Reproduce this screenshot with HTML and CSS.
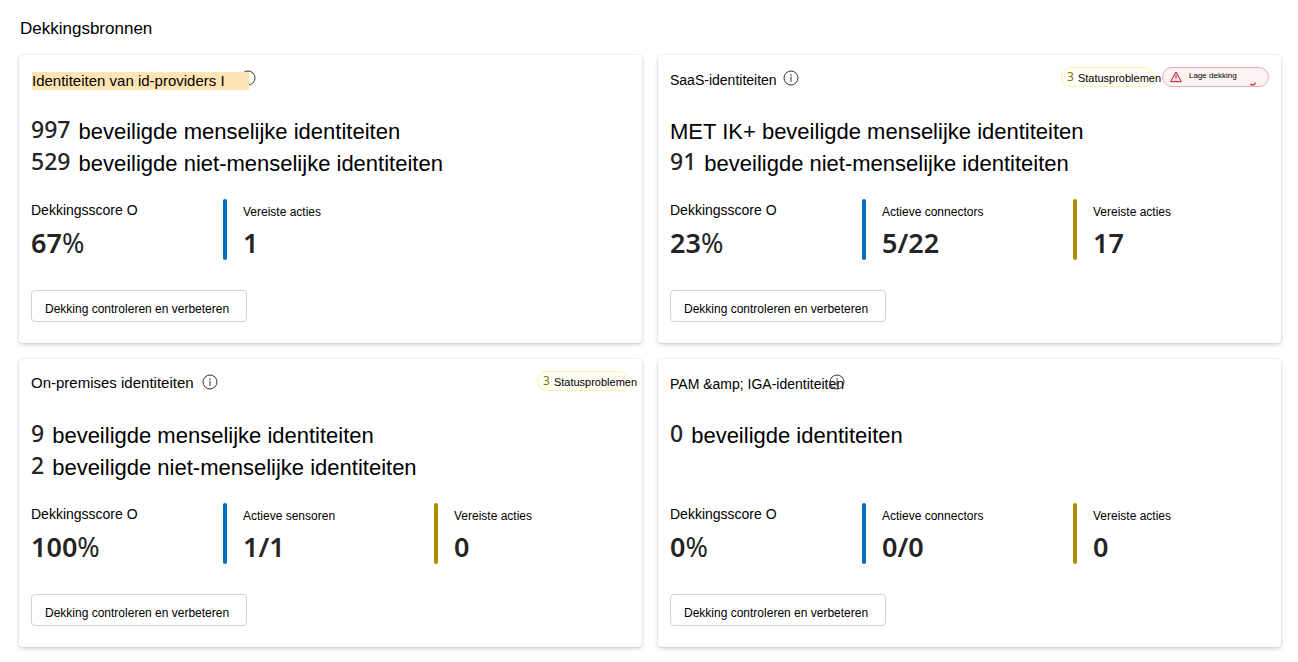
FILE: index.html
```html
<!DOCTYPE html>
<html lang="nl">
<head>
    <meta charset="UTF-8">
    <meta name="viewport" content="width=device-width, initial-scale=1.0">
    <title>Dekkingsbronnen</title>
    <link rel="stylesheet" href="styles.css">
</head>
<body>
    <!-- Shared icons -->
    <svg class="sprite" aria-hidden="true">
        <symbol id="info" viewBox="0 0 16 16">
            <circle cx="8" cy="8" r="7" fill="none" stroke="currentColor" stroke-width="1"/>
            <path d="M8 7v4.5" stroke="currentColor" stroke-width="1" stroke-linecap="round"/>
            <circle cx="8" cy="5" r="0.8" fill="currentColor"/>
        </symbol>
        <symbol id="ring" viewBox="0 0 16 16">
            <circle cx="8" cy="8" r="7" fill="none" stroke="currentColor" stroke-width="1"/>
        </symbol>
    </svg>

    <main class="page">
        <h1>Dekkingsbronnen</h1>

        <div class="cards">
            <section class="card">
                <div class="card-header">
                    <h2 class="highlight">Identiteiten van id-providers I</h2>
                    <svg class="icon icon-behind"><use href="#ring"/></svg>
                </div>
                <div class="totals">
                    <p><span class="count">997</span> beveiligde menselijke identiteiten</p>
                    <p><span class="count">529</span> beveiligde niet-menselijke identiteiten</p>
                </div>
                <div class="metrics">
                    <div class="metric score">
                        <div class="label">Dekkingsscore O</div>
                        <div class="value">67<span class="percent">%</span></div>
                    </div>
                    <div class="metric blue">
                        <div class="label">Vereiste acties</div>
                        <div class="value">1</div>
                    </div>
                </div>
                <button type="button">Dekking controleren en verbeteren</button>
            </section>

            <section class="card">
                <div class="card-header">
                    <h2 class="compact">SaaS-identiteiten</h2>
                    <svg class="icon"><use href="#info"/></svg>
                    <div class="badges">
                        <span class="badge warning"><span class="badge-count">3</span>Statusproblemen</span>
                        <span class="badge danger">
                            <svg class="alert" viewBox="0 0 12 12">
                                <path d="M6 1 L11.3 10.7 H0.7 Z" fill="none" stroke="currentColor" stroke-linejoin="round"/>
                                <path d="M6 4.3v3" stroke="currentColor" stroke-linecap="round"/>
                                <circle cx="6" cy="9" r="0.6" fill="currentColor"/>
                            </svg>
                            <span class="badge-text">Lage dekking</span>
                            <svg class="tail" viewBox="0 0 6 4">
                                <path d="M0.3 2 Q1.5 3.4 3.6 2.8 Q5.2 2.4 5.4 0.5" fill="none" stroke="currentColor" stroke-width="1.2"/>
                            </svg>
                        </span>
                    </div>
                </div>
                <div class="totals">
                    <p>MET IK+ beveiligde menselijke identiteiten</p>
                    <p><span class="count">91</span> beveiligde niet-menselijke identiteiten</p>
                </div>
                <div class="metrics">
                    <div class="metric score">
                        <div class="label">Dekkingsscore O</div>
                        <div class="value">23<span class="percent">%</span></div>
                    </div>
                    <div class="metric blue">
                        <div class="label">Actieve connectors</div>
                        <div class="value">5/22</div>
                    </div>
                    <div class="metric gold">
                        <div class="label">Vereiste acties</div>
                        <div class="value">17</div>
                    </div>
                </div>
                <button type="button">Dekking controleren en verbeteren</button>
            </section>

            <section class="card">
                <div class="card-header">
                    <h2>On-premises identiteiten</h2>
                    <svg class="icon icon-spaced"><use href="#info"/></svg>
                    <div class="badges">
                        <span class="badge warning"><span class="badge-count">3</span>Statusproblemen</span>
                    </div>
                </div>
                <div class="totals">
                    <p><span class="count">9</span> beveiligde menselijke identiteiten</p>
                    <p><span class="count">2</span> beveiligde niet-menselijke identiteiten</p>
                </div>
                <div class="metrics">
                    <div class="metric score">
                        <div class="label">Dekkingsscore O</div>
                        <div class="value">100<span class="percent">%</span></div>
                    </div>
                    <div class="metric blue">
                        <div class="label">Actieve sensoren</div>
                        <div class="value">1/1</div>
                    </div>
                    <div class="metric gold">
                        <div class="label">Vereiste acties</div>
                        <div class="value">0</div>
                    </div>
                </div>
                <button type="button">Dekking controleren en verbeteren</button>
            </section>

            <section class="card">
                <div class="card-header">
                    <h2 class="compact">PAM &amp;amp; IGA-identiteiten</h2>
                    <svg class="icon icon-over"><use href="#info"/></svg>
                </div>
                <div class="totals">
                    <p><span class="count">0</span> beveiligde identiteiten</p>
                </div>
                <div class="metrics">
                    <div class="metric score">
                        <div class="label">Dekkingsscore O</div>
                        <div class="value">0<span class="percent">%</span></div>
                    </div>
                    <div class="metric blue">
                        <div class="label">Actieve connectors</div>
                        <div class="value">0/0</div>
                    </div>
                    <div class="metric gold">
                        <div class="label">Vereiste acties</div>
                        <div class="value">0</div>
                    </div>
                </div>
                <button type="button">Dekking controleren en verbeteren</button>
            </section>
        </div>
    </main>
</body>
</html>
```
FILE: styles.css
```css
* {
    box-sizing: border-box;
}
body {
    margin: 0;
    background-color: #fff;
    color: #000;
    font-family: "Liberation Sans", Arial, sans-serif;
}
h1, h2, p {
    margin: 0;
    font-weight: normal;
}
.sprite {
    display: none;
}
.page {
    padding: 17px 17px 15px 19px;
}
h1 {
    padding-left: 1px;
    font-size: 17px;
    line-height: 24px;
    margin-bottom: 14px;
}
.cards {
    display: grid;
    grid-template-columns: 1fr 1fr;
    gap: 16px;
}
.card {
    padding: 12px 12px 21px;
    border-radius: 4px;
    background-color: #fff;
    box-shadow: 0 0 2px rgba(0, 0, 0, 0.14), 0 2px 4px rgba(0, 0, 0, 0.16);
}
.card-header {
    display: flex;
    align-items: flex-start;
    height: 28px;
    margin-bottom: 20px;
}
h2 {
    padding-top: 3px;
    font-size: 15px;
    line-height: 18px;
    white-space: nowrap;
}
.compact {
    padding-top: 4px;
    font-size: 14px;
}
.highlight {
    position: relative;
    z-index: 1;
    margin-top: 5px;
    margin-left: 1px;
    padding-top: 0;
    padding-right: 24px;
    background-color: #ffe5b4;
}
.icon {
    flex: none;
    width: 16px;
    height: 16px;
    margin-top: 3px;
    margin-left: 6px;
    color: #333;
}
.icon-spaced {
    margin-left: 8px;
}
.icon-behind {
    margin-left: -9px;
}
.icon-over {
    margin-left: -15px;
}
.badges {
    display: flex;
    gap: 8px;
    margin-left: auto;
}
.badge {
    display: flex;
    align-items: center;
    height: 20px;
    border: 1px solid;
    border-radius: 10px;
    font-size: 11px;
    white-space: nowrap;
}
.warning {
    position: relative;
    z-index: 1;
    width: 93px;
    padding: 2px 0 0 5px;
    border-color: #fef3a8;
    background-color: #fffef5;
}
.badge-count {
    margin-right: 4px;
    color: #817400;
    font-family: "Noto Sans", sans-serif;
    font-size: 12px;
    line-height: 16px;
    padding-bottom: 2px;
}
.danger {
    width: 107px;
    padding: 0 12px 0 7px;
    border-color: #eeacb2;
    background-color: #fdf3f4;
}
.badge-text {
    margin-left: 7px;
    padding-bottom: 4px;
    font-size: 8px;
}
.alert {
    width: 12px;
    height: 12px;
    color: #c50f1f;
}
.tail {
    align-self: flex-end;
    width: 6px;
    height: 4px;
    margin-left: auto;
    color: #c50f1f;
}
.totals {
    min-height: 64px;
    margin-bottom: 20px;
    font-size: 22px;
    line-height: 34px;
}
.totals p {
    display: flex;
    gap: 8px;
    height: 32px;
}
.count {
    color: #242424;
    font-family: "Noto Sans", sans-serif;
    font-size: 23px;
    font-weight: 500;
    line-height: 28px;
}
.metrics {
    display: grid;
    grid-template-columns: 192fr 211fr 196fr;
    margin-bottom: 30px;
}
.metric {
    position: relative;
    height: 61px;
    padding-left: 20px;
}
.metric::before {
    content: "";
    position: absolute;
    top: 0;
    bottom: 0;
    left: 0;
    width: 4px;
    border-radius: 2px;
}
.blue::before {
    background-color: #006cbe;
}
.gold::before {
    background-color: #ae8c00;
}
.score {
    padding-left: 0;
}
.label {
    padding-top: 2px;
    font-size: 12px;
    line-height: 22px;
}
.score .label {
    padding-top: 0;
    padding-bottom: 2px;
    font-size: 14px;
}
.value {
    color: #242424;
    font-family: "Noto Sans", sans-serif;
    font-size: 27px;
    font-weight: 600;
    line-height: 40px;
}
.percent {
    font-weight: 400;
}
button {
    display: block;
    height: 32px;
    padding: 5px 17px 0 13px;
    border: 1px solid #d1d1d1;
    border-radius: 4px;
    background-color: #fff;
    color: #000;
    font-family: inherit;
    font-size: 12px;
    cursor: pointer;
}
button:hover {
    background-color: #f5f5f5;
}
```
